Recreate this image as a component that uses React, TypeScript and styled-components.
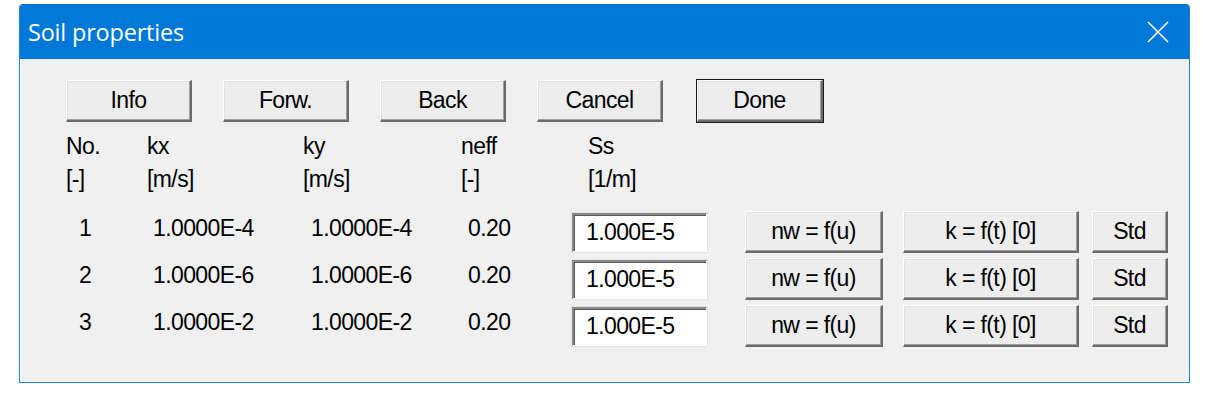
import React from "react";
import styled, { createGlobalStyle } from "styled-components";

const GlobalStyle = createGlobalStyle`
  body {
    margin: 0;
    background: #ffffff;
    font-family: "Liberation Sans", Arial, sans-serif;
  }
`;

const COLUMNS = "81px 156px 158px 111px 173px 158px 189px 76px";

const Window = styled.div`
  margin: 4px 0 0 19px;
  width: 1171px;
  border: 1px solid #1a84d8;
  border-top: none;
  border-radius: 4px 4px 0 0;
  overflow: hidden;
  box-sizing: border-box;
`;

const TitleBar = styled.div`
  height: 55px;
  background: #0078d7;
  display: flex;
  align-items: center;
  justify-content: space-between;
  padding: 0 20px 0 8px;
  color: #ffffff;
`;

const Title = styled.div`
  font-family: "Open Sans", "Noto Sans", sans-serif;
  font-size: 23.5px;
  letter-spacing: -0.2px;
`;

const Client = styled.div`
  background: #f0f0f0;
  padding: 21px 0 35px 46px;
  box-shadow: inset 1px 0 #ffffff, inset 0 -1px #ffffff, inset 0 1px #e8e8e8;
`;

const ButtonRow = styled.div`
  display: flex;
  gap: 31px;
  margin-bottom: 9px;
`;

const Button = styled.div<{ $w: number; $default?: boolean }>`
  width: ${(p) => p.$w}px;
  height: 42px;
  box-sizing: border-box;
  display: flex;
  align-items: center;
  justify-content: center;
  margin-left: ${(p) => (p.$default ? 3 : 0)}px;
  background: #ededed;
  border-style: solid;
  border-width: 1px 2px 2px 1px;
  border-color: #ffffff #6b6b6b #6b6b6b #ffffff;
  box-shadow: ${(p) =>
    p.$default
      ? "0 0 0 1px #1a1a1a, inset -1px -1px #a0a0a0, inset 1px 1px #e3e3e3"
      : "inset -1px -1px #a0a0a0, inset 1px 1px #e3e3e3"};
  font-size: 23px;
  letter-spacing: -0.6px;
  color: #000000;
`;

const HeadGrid = styled.div`
  display: grid;
  grid-template-columns: ${COLUMNS};
  grid-auto-rows: 33px;
  margin-bottom: 14px;
`;

const HeadCell = styled.div<{ $indent?: number }>`
  padding-left: ${(p) => p.$indent ?? 0}px;
  font-size: 23px;
  letter-spacing: -0.6px;
  line-height: 30px;
  color: #000000;
`;

const DataGrid = styled.div`
  display: grid;
  grid-template-columns: ${COLUMNS};
  grid-auto-rows: 42px;
  row-gap: 5px;
`;

const Cell = styled.div<{ $indent?: number }>`
  display: flex;
  align-items: center;
  padding-left: ${(p) => p.$indent ?? 0}px;
`;

const Value = styled.span`
  margin-bottom: 7px;
  font-size: 23px;
  letter-spacing: -0.6px;
  color: #000000;
`;

const Field = styled.div`
  width: 135px;
  height: 39px;
  box-sizing: border-box;
  display: flex;
  align-items: center;
  padding-left: 12px;
  background: #ffffff;
  border-style: solid;
  border-width: 2px 1px 1px 2px;
  border-color: #8a8a8a #ffffff #ffffff #8a8a8a;
  box-shadow: inset 1px 1px #5a5a5a, 0 0 0 1px #e3e3e3;
  font-size: 23px;
  letter-spacing: -0.6px;
`;

const CloseIcon = () => (
  <svg width="22" height="22" viewBox="0 0 22 22">
    <path d="M1 1 L21 21 M21 1 L1 21" stroke="#ffffff" strokeWidth="1.6" />
  </svg>
);

const rows = [
  { no: "1", kx: "1.0000E-4", ky: "1.0000E-4", neff: "0.20", ss: "1.000E-5" },
  { no: "2", kx: "1.0000E-6", ky: "1.0000E-6", neff: "0.20", ss: "1.000E-5" },
  { no: "3", kx: "1.0000E-2", ky: "1.0000E-2", neff: "0.20", ss: "1.000E-5" },
];

const App = () => {
  return (
    <>
      <GlobalStyle />
      <Window>
        <TitleBar>
          <Title>Soil properties</Title>
          <CloseIcon />
        </TitleBar>
        <Client>
          <ButtonRow>
            <Button $w={126}>Info</Button>
            <Button $w={126}>Forw.</Button>
            <Button $w={126}>Back</Button>
            <Button $w={126}>Cancel</Button>
            <Button $w={126} $default>
              Done
            </Button>
          </ButtonRow>
          <HeadGrid>
            <HeadCell>No.</HeadCell>
            <HeadCell>kx</HeadCell>
            <HeadCell>ky</HeadCell>
            <HeadCell>neff</HeadCell>
            <HeadCell $indent={16}>Ss</HeadCell>
            <div />
            <div />
            <div />
            <HeadCell>[-]</HeadCell>
            <HeadCell>[m/s]</HeadCell>
            <HeadCell>[m/s]</HeadCell>
            <HeadCell>[-]</HeadCell>
            <HeadCell $indent={16}>[1/m]</HeadCell>
          </HeadGrid>
          <DataGrid>
            {rows.map((r) => (
              <React.Fragment key={r.no}>
                <Cell $indent={13}>
                  <Value>{r.no}</Value>
                </Cell>
                <Cell $indent={6}>
                  <Value>{r.kx}</Value>
                </Cell>
                <Cell $indent={8}>
                  <Value>{r.ky}</Value>
                </Cell>
                <Cell $indent={7}>
                  <Value>{r.neff}</Value>
                </Cell>
                <Cell>
                  <Field>{r.ss}</Field>
                </Cell>
                <Cell>
                  <Button $w={138}>nw = f(u)</Button>
                </Cell>
                <Cell>
                  <Button $w={176}>k = f(t) [0]</Button>
                </Cell>
                <Cell>
                  <Button $w={76}>Std</Button>
                </Cell>
              </React.Fragment>
            ))}
          </DataGrid>
        </Client>
      </Window>
    </>
  );
};

export default App;
